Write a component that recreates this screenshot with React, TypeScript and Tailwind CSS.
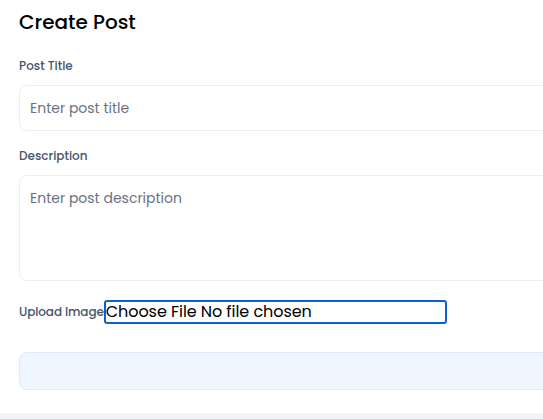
export default function App() {
  return (
    <div className="min-h-screen bg-gray-100 font-['Poppins','Open_Sans',sans-serif]">
      <div className="bg-white pl-[19px] pt-2 pb-[23px] overflow-hidden">
        <h1 className="text-xl leading-7 font-medium text-black">Create Post</h1>

        <label className="block mt-[22px] text-xs leading-4 font-medium text-slate-600">Post Title</label>
        <input
          type="text"
          placeholder="Enter post title"
          className="block mt-[11px] w-[560px] h-[46px] px-[10px] rounded-lg border border-[#eeeef4] text-sm text-gray-700 placeholder:text-gray-500 outline-none"
        />

        <label className="block mt-[17px] text-xs leading-4 font-medium text-slate-600">Description</label>
        <textarea
          placeholder="Enter post description"
          className="block mt-[11px] w-[560px] h-[106px] px-[10px] py-3 rounded-lg border border-[#eeeef4] text-sm text-gray-700 placeholder:text-gray-500 outline-none resize-none"
        />

        <div className="mt-[19px] flex items-center">
          <span className="text-xs font-medium text-slate-600 tracking-[-0.1px]">Upload Image</span>
          <div className="w-[343px] h-6 flex items-center rounded-[3px] border-2 border-[#0a5fd1] text-base text-black tracking-[-0.05px]">
            <span>Choose File</span>
            <span className="ml-1">No file chosen</span>
          </div>
        </div>

        <button className="block mt-7 w-[560px] h-[38px] rounded-lg border border-blue-100 bg-blue-50" />
      </div>
    </div>
  );
}
